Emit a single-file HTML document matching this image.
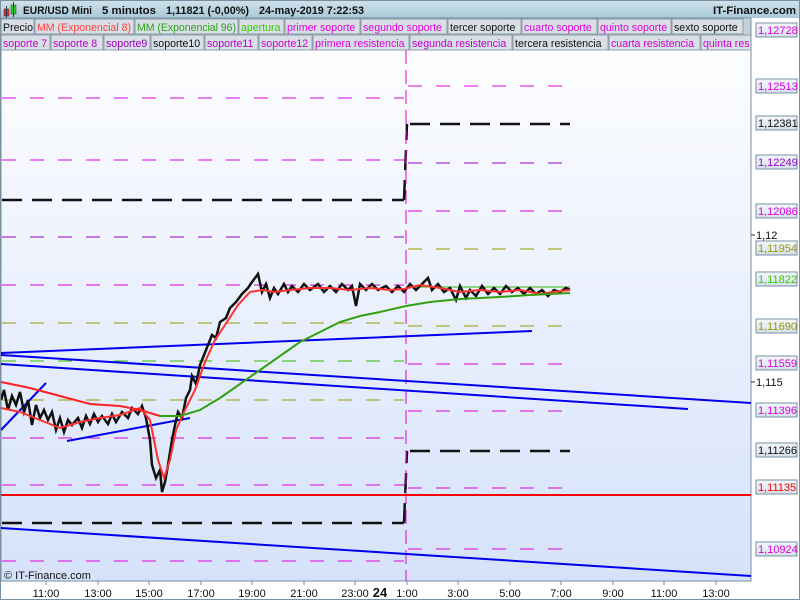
<!DOCTYPE html>
<html><head><meta charset="utf-8"><style>
body{margin:0;width:800px;height:600px;overflow:hidden;background:#fff;font-family:"Liberation Sans",sans-serif}
svg{display:block}
</style></head><body>
<svg width="800" height="600" xmlns="http://www.w3.org/2000/svg" font-family="Liberation Sans, sans-serif">
<defs>
<linearGradient id="bg" x1="0" y1="0" x2="0" y2="1"><stop offset="0" stop-color="#ffffff"/><stop offset="1" stop-color="#d6e2fa"/></linearGradient>
<linearGradient id="hd" x1="0" y1="0" x2="0" y2="1"><stop offset="0" stop-color="#cfe3ec"/><stop offset="1" stop-color="#a9c9d7"/></linearGradient>
<linearGradient id="lb" x1="0" y1="0" x2="0" y2="1"><stop offset="0" stop-color="#f4f8fc"/><stop offset="1" stop-color="#d5e0ea"/></linearGradient>
</defs>
<rect x="0" y="0" width="800" height="600" fill="#fff"/>
<rect x="1" y="18" width="750" height="563" fill="url(#bg)"/>
<!-- header -->
<rect x="0" y="0" width="800" height="18" fill="url(#hd)"/>
<rect x="4" y="9" width="5" height="7" fill="#e03030" stroke="#333" stroke-width="0.5"/>
<line x1="6.5" y1="6" x2="6.5" y2="18" stroke="#333"/>
<rect x="11" y="5" width="5" height="9" fill="#30d030" stroke="#333" stroke-width="0.5"/>
<line x1="13.5" y1="2" x2="13.5" y2="17" stroke="#333"/>
<g font-size="11" font-weight="bold" fill="#111">
<text x="23" y="14" textLength="69" lengthAdjust="spacingAndGlyphs">EUR/USD Mini</text>
<text x="102" y="14" textLength="54" lengthAdjust="spacingAndGlyphs">5 minutos</text>
<text x="166" y="14" textLength="83" lengthAdjust="spacingAndGlyphs">1,11821 (-0,00%)</text>
<text x="259" y="14" textLength="105" lengthAdjust="spacingAndGlyphs">24-may-2019 7:22:53</text>
<text x="713" y="14" textLength="83" lengthAdjust="spacingAndGlyphs">IT-Finance.com</text>
</g>
<!-- legends -->
<g font-size="10.6">
<rect x="0" y="18" width="751" height="32" fill="#c4d0d8"/>
<g stroke="#8ea0ac" fill="#d8e0e6">
<rect x="1" y="19" width="33" height="15"/><rect x="35" y="19" width="99" height="15"/><rect x="135" y="19" width="103" height="15"/><rect x="239" y="19" width="45" height="15"/><rect x="285" y="19" width="75" height="15"/><rect x="361" y="19" width="86" height="15"/><rect x="448" y="19" width="73" height="15"/><rect x="522" y="19" width="75" height="15"/><rect x="598" y="19" width="73" height="15"/><rect x="672" y="19" width="71" height="15"/>
<rect x="1" y="35" width="49" height="15"/><rect x="51" y="35" width="52" height="15"/><rect x="104" y="35" width="46" height="15"/><rect x="151" y="35" width="53" height="15"/><rect x="205" y="35" width="53" height="15"/><rect x="259" y="35" width="53" height="15"/><rect x="313" y="35" width="96" height="15"/><rect x="410" y="35" width="102" height="15"/><rect x="513" y="35" width="95" height="15"/><rect x="609" y="35" width="91" height="15"/><rect x="701" y="35" width="50" height="15"/>
</g>
<text x="3" y="31" fill="#111">Precio</text>
<text x="37" y="31" fill="#ff4040" textLength="94">MM (Exponencial 8)</text>
<text x="137" y="31" fill="#30a020" textLength="99">MM (Exponencial 96)</text>
<text x="241" y="31" fill="#33cc00">apertura</text>
<text x="287" y="31" fill="#dd00dd">primer soporte</text>
<text x="363" y="31" fill="#dd00dd">segundo soporte</text>
<text x="450" y="31" fill="#111">tercer soporte</text>
<text x="524" y="31" fill="#dd00dd">cuarto soporte</text>
<text x="600" y="31" fill="#dd00dd">quinto soporte</text>
<text x="674" y="31" fill="#111">sexto soporte</text>
<text x="3" y="47" fill="#cc00cc">soporte 7</text>
<text x="53" y="47" fill="#bb00cc">soporte 8</text>
<text x="106" y="47" fill="#9900bb">soporte9</text>
<text x="153" y="47" fill="#111">soporte10</text>
<text x="207" y="47" fill="#bb00cc">soporte11</text>
<text x="261" y="47" fill="#cc00cc">soporte12</text>
<text x="315" y="47" fill="#dd00dd">primera resistencia</text>
<text x="412" y="47" fill="#bb00cc">segunda resistencia</text>
<text x="515" y="47" fill="#111">tercera resistencia</text>
<text x="611" y="47" fill="#cc00cc">cuarta resistencia</text>
<text x="703" y="47" fill="#cc00cc">quinta res</text>
</g>
<rect x="1" y="18" width="750" height="563" fill="none" stroke="#7890a0"/>
<!-- dashed levels -->
<g stroke-width="1" stroke-dasharray="14,14" fill="none">
<line x1="2" y1="98" x2="404" y2="98" stroke="#dd00dd"/>
<line x1="2" y1="160" x2="404" y2="160" stroke="#dd00dd"/>
<line x1="2" y1="237" x2="404" y2="237" stroke="#9900cc"/>
<line x1="2" y1="285" x2="404" y2="285" stroke="#dd00dd"/>
<line x1="2" y1="323" x2="404" y2="323" stroke="#999900"/>
<line x1="2" y1="361" x2="404" y2="361" stroke="#33bb00"/>
<line x1="2" y1="400" x2="404" y2="400" stroke="#999900"/>
<line x1="2" y1="438" x2="404" y2="438" stroke="#dd00dd"/>
<line x1="2" y1="485" x2="404" y2="485" stroke="#dd00dd"/>
<line x1="2" y1="561" x2="404" y2="561" stroke="#dd00dd"/>
<line x1="408" y1="86" x2="570" y2="86" stroke="#dd00dd"/>
<line x1="408" y1="163" x2="570" y2="163" stroke="#9900cc"/>
<line x1="408" y1="211" x2="570" y2="211" stroke="#dd00dd"/>
<line x1="408" y1="249" x2="570" y2="249" stroke="#999900"/>
<line x1="408" y1="326" x2="570" y2="326" stroke="#999900"/>
<line x1="408" y1="364" x2="570" y2="364" stroke="#dd00dd"/>
<line x1="408" y1="411" x2="570" y2="411" stroke="#dd00dd"/>
<line x1="408" y1="488" x2="570" y2="488" stroke="#dd00dd"/>
<line x1="408" y1="549" x2="570" y2="549" stroke="#dd00dd"/>
</g>
<g stroke="#111" stroke-width="2.5" stroke-dasharray="20,10" fill="none">
<line x1="2" y1="200" x2="404" y2="200"/>
<line x1="2" y1="523" x2="404" y2="523"/>
<line x1="410" y1="124" x2="570" y2="124"/>
<line x1="410" y1="451" x2="570" y2="451"/>
</g>
<line x1="404" y1="200" x2="407" y2="124" stroke="#111" stroke-width="2.5" stroke-dasharray="20,10"/>
<line x1="404" y1="523" x2="407" y2="451" stroke="#111" stroke-width="2.5" stroke-dasharray="20,10"/>
<line x1="408" y1="287" x2="570" y2="287" stroke="#33bb00" stroke-width="1"/>
<line x1="406" y1="50" x2="406" y2="581" stroke="#dd00dd" stroke-width="1" stroke-dasharray="14,6"/>
<line x1="1" y1="495" x2="751" y2="495" stroke="#ff0000" stroke-width="2"/>
<g stroke="#0000ee" stroke-width="2" fill="none">
<line x1="1" y1="353" x2="532" y2="331"/>
<line x1="1" y1="355" x2="751" y2="403"/>
<line x1="1" y1="364" x2="688" y2="409"/>
<line x1="1" y1="528" x2="751" y2="576"/>
<line x1="1" y1="430" x2="46" y2="383"/>
<line x1="67" y1="441" x2="190" y2="418"/>
</g>
<!-- price -->
<polyline fill="none" stroke="#111" stroke-width="2.5" points="1,400 4,390 8,410 12,396 16,405 20,392 24,412 28,400 32,425 36,405 40,418 44,410 48,420 52,412 56,430 60,418 64,432 68,420 72,425 78,418 82,428 86,416 90,424 94,414 98,422 102,416 108,424 112,414 116,422 122,412 128,418 132,408 138,414 142,406 146,418 150,440 152,465 156,478 160,470 162,492 165,482 168,465 172,440 175,425 178,412 182,418 186,398 190,390 192,376 196,384 200,365 204,355 208,345 212,335 216,338 220,322 226,318 230,308 236,302 242,294 248,288 252,282 258,274 262,292 266,284 270,298 274,288 278,294 284,284 288,292 292,286 298,292 304,284 310,290 318,284 324,292 330,286 336,292 342,284 348,290 352,286 356,306 360,284 366,290 372,284 378,290 386,286 392,292 398,286 404,292 410,284 416,290 422,284 428,278 432,290 438,284 444,292 450,288 456,300 460,286 466,298 470,290 476,296 482,286 488,294 494,288 500,294 506,286 512,292 518,288 524,294 530,288 536,294 542,290 548,296 554,290 560,292 566,288 570,290"/>
<polyline fill="none" stroke="#ff3030" stroke-width="2" points="1,408 20,412 40,420 60,428 80,422 100,418 120,415 140,408 150,420 158,460 164,478 170,460 176,430 184,412 195,390 205,362 215,340 225,325 238,305 250,292 262,290 275,292 290,290 310,288 330,288 350,290 370,288 390,290 404,289 420,285 440,288 460,292 480,290 500,292 520,290 540,294 560,291 570,290"/>
<polyline fill="none" stroke="#ff2020" stroke-width="2" points="1,382 30,388 60,396 90,404 120,406 140,410 160,416"/>
<polyline fill="none" stroke="#33a010" stroke-width="2" points="160,416 180,416 200,410 220,398 240,384 260,370 280,356 300,342 320,332 340,322 360,316 380,312 406,306 430,302 460,299 500,297 530,295 570,293"/>
<!-- right axis -->
<g font-size="11">
<line x1="751" y1="235" x2="755" y2="235" stroke="#333"/><text x="756" y="239" fill="#111">1,12</text>
<line x1="751" y1="382" x2="755" y2="382" stroke="#333"/><text x="756" y="386" fill="#111">1,115</text>
<g stroke="#7890a0" fill="url(#lb)">
<rect x="756" y="23" width="41" height="14"/><rect x="756" y="79" width="41" height="14"/><rect x="756" y="116" width="41" height="14"/><rect x="756" y="155" width="41" height="14"/><rect x="756" y="204" width="41" height="14"/><rect x="756" y="241" width="41" height="14"/><rect x="756" y="272" width="41" height="14"/><rect x="756" y="319" width="41" height="14"/><rect x="756" y="356" width="41" height="14"/><rect x="756" y="403" width="41" height="14"/><rect x="756" y="443" width="41" height="14"/><rect x="756" y="480" width="41" height="14"/><rect x="756" y="542" width="41" height="14"/>
</g>
<text x="758" y="34" fill="#dd00dd">1,12728</text>
<text x="758" y="90" fill="#dd00dd">1,12513</text>
<text x="758" y="127" fill="#111">1,12381</text>
<text x="758" y="166" fill="#9900cc">1,12249</text>
<text x="758" y="215" fill="#dd00dd">1,12086</text>
<text x="758" y="252" fill="#999900">1,11954</text>
<text x="758" y="283" fill="#33cc00">1,11822</text>
<text x="758" y="330" fill="#999900">1,11690</text>
<text x="758" y="367" fill="#dd00dd">1,11559</text>
<text x="758" y="414" fill="#dd00dd">1,11396</text>
<text x="758" y="454" fill="#111">1,11266</text>
<text x="758" y="491" fill="#ff0000">1,11135</text>
<text x="758" y="553" fill="#dd00dd">1,10924</text>
</g>
<!-- bottom axis -->
<text x="4" y="579" font-size="11" fill="#111">© IT-Finance.com</text>
<g stroke="#7890a0"><line x1="46" y1="581" x2="46" y2="585"/><line x1="98" y1="581" x2="98" y2="585"/><line x1="149" y1="581" x2="149" y2="585"/><line x1="201" y1="581" x2="201" y2="585"/><line x1="252" y1="581" x2="252" y2="585"/><line x1="304" y1="581" x2="304" y2="585"/><line x1="355" y1="581" x2="355" y2="585"/><line x1="407" y1="581" x2="407" y2="585"/><line x1="458" y1="581" x2="458" y2="585"/><line x1="510" y1="581" x2="510" y2="585"/><line x1="561" y1="581" x2="561" y2="585"/><line x1="613" y1="581" x2="613" y2="585"/><line x1="664" y1="581" x2="664" y2="585"/><line x1="716" y1="581" x2="716" y2="585"/></g>
<g font-size="11" fill="#111" text-anchor="middle">
<text x="46" y="597">11:00</text><text x="98" y="597">13:00</text><text x="149" y="597">15:00</text><text x="201" y="597">17:00</text><text x="252" y="597">19:00</text><text x="304" y="597">21:00</text><text x="355" y="597">23:00</text><text x="380" y="597" font-weight="bold" font-size="13">24</text><text x="407" y="597">1:00</text><text x="458" y="597">3:00</text><text x="510" y="597">5:00</text><text x="561" y="597">7:00</text><text x="613" y="597">9:00</text><text x="664" y="597">11:00</text><text x="716" y="597">13:00</text>
</g>
<rect x="0.5" y="0.5" width="799" height="599" fill="none" stroke="#7890a0"/>
</svg>
</body></html>
